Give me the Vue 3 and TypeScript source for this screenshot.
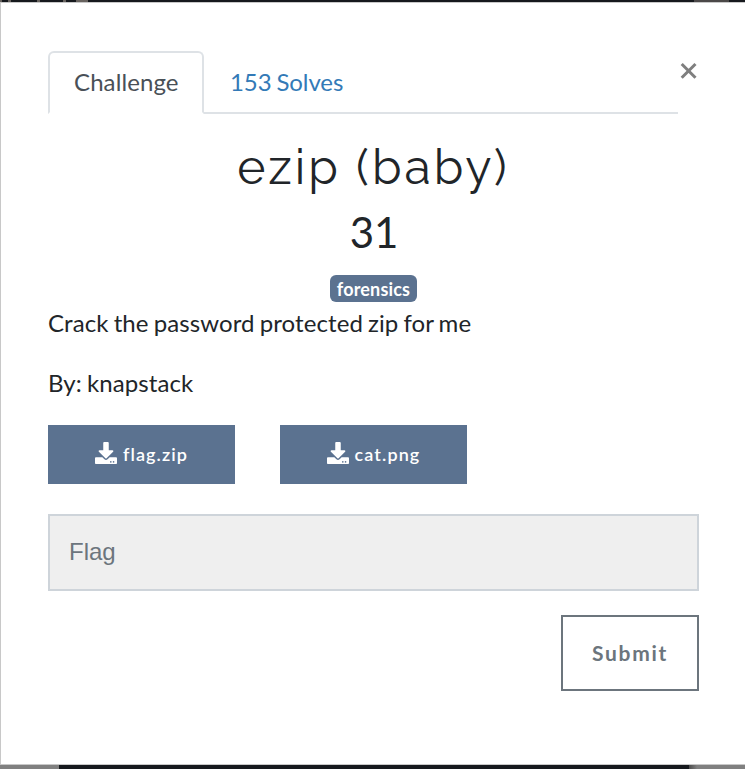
<script setup lang="ts">
import { ref } from 'vue'

const tabs: string[] = ['Challenge', '153 Solves']
const active = ref(0)
const files: string[] = ['flag.zip', 'cat.png']
const flag = ref('')
</script>

<template>
  <div class="page">
    <div class="strip top"><span class="specks"></span><span class="block"></span></div>
    <main class="modal">
      <header class="head">
        <nav class="tabs">
          <a v-for="(tab, i) in tabs" :key="tab" class="tab" :class="{ active: i === active }" @click="active = i">{{ tab }}</a>
        </nav>
        <button class="close" aria-label="Close">
          <svg viewBox="0 0 18 18" width="18" height="18"><path d="M1.700 2 15.500 15.800M15.500 2 1.700 15.800" /></svg>
        </button>
      </header>
      <h2 class="title">ezip (baby)</h2>
      <h3 class="points">31</h3>
      <div class="tags"><span class="badge">forensics</span></div>
      <p class="desc">Crack the password protected zip for me</p>
      <p class="desc author">By: knapstack</p>
      <div class="files">
        <a v-for="file in files" :key="file" class="file">
          <svg viewBox="0 0 512 512" width="22" height="22">
            <path d="M216 0h80c13.300 0 24 10.700 24 24v168h87.700c17.800 0 26.700 21.500 14.100 34.100L269.700 378.300c-7.500 7.500-19.800 7.500-27.300 0L90.100 226.100c-12.600-12.600-3.700-34.100 14.100-34.100H192V24c0-13.300 10.700-24 24-24zm296 376v112c0 13.300-10.700 24-24 24H24c-13.300 0-24-10.700-24-24V376c0-13.300 10.700-24 24-24h146.700l49 49c20.100 20.100 52.500 20.100 72.600 0l49-49H488c13.300 0 24 10.700 24 24zm-124 88c0-11-9-20-20-20s-20 9-20 20 9 20 20 20 20-9 20-20zm64 0c0-11-9-20-20-20s-20 9-20 20 9 20 20 20 20-9 20-20z" />
          </svg>
          <span>{{ file }}</span>
        </a>
      </div>
      <input v-model="flag" class="flag" type="text" placeholder="Flag" />
      <button class="submit">Submit</button>
    </main>
    <div class="strip bottom"><span class="left"></span><span class="right"></span></div>
  </div>
</template>

<style>
body {
  margin: 0;
  overflow: hidden;
}
</style>

<style scoped>
.page {
  width: 745px;
  height: 769px;
  display: flex;
  flex-direction: column;
  background: #16191d;
  font-family: Lato, sans-serif;
  font-size: 24px;
  line-height: 36px;
  color: #212529;
}
.strip {
  display: flex;
  flex: none;
}
.top {
  height: 2px;
}
.specks {
  width: 90px;
  background: linear-gradient(
    90deg,
    #68635f 0 2px, transparent 2px 8px,
    #68635f 8px 11px, transparent 11px 37px,
    #68635f 37px 40px, transparent 40px 63px,
    #68635f 63px 66px, transparent 66px 76px,
    #68635f 76px 88px, transparent 88px
  );
}
.top .block {
  width: 35px;
  margin-left: auto;
  margin-right: 16px;
  background: #4b4848;
}
.bottom {
  height: 4px;
  justify-content: space-between;
}
.bottom .left {
  width: 59px;
  background: #808080;
}
.bottom .right {
  width: 56px;
  background: linear-gradient(90deg, #4b4b4b, #808080 8px);
}
.modal {
  box-sizing: border-box;
  height: 763px;
  display: flex;
  flex-direction: column;
  padding: 48px 46px 0 47px;
  background: #fff;
  border: solid #c8c8c8;
  border-width: 1px 0 1px 1px;
}
.head {
  display: flex;
  align-items: flex-start;
  justify-content: space-between;
  height: 63px;
}
.tabs {
  box-sizing: border-box;
  display: flex;
  width: 630px;
  height: 63px;
  border-bottom: 2px solid #dee2e6;
}
.tab {
  box-sizing: border-box;
  height: 63px;
  padding: 11px 24px;
  border: 2px solid transparent;
  border-radius: 6px 6px 0 0;
  color: #337ab7;
  letter-spacing: -0.1px;
  word-spacing: -1px;
  cursor: pointer;
}
.tab.active {
  color: #495057;
  letter-spacing: 0.1px;
  width: 156px;
  background: #fff;
  border-color: #dee2e6 #dee2e6 #fff;
}
.close {
  margin: 11px 1px 0 0;
  padding: 0;
  border: 0;
  background: none;
  line-height: 0;
}
.close svg {
  stroke: #7f7f7f;
  stroke-width: 3;
}
.title {
  margin: 24px 0 0;
  font-family: Raleway, Lato, sans-serif;
  font-size: 48px;
  font-weight: 400;
  line-height: 58px;
  letter-spacing: 3px;
  text-align: center;
}
.points {
  margin: 11px 0 0;
  padding-left: 1px;
  font-size: 42px;
  font-weight: 400;
  line-height: 50px;
  text-align: center;
}
.tags {
  display: flex;
  justify-content: center;
  margin-top: 18px;
}
.badge {
  height: 27px;
  padding: 0 7px;
  border-radius: 6px;
  background: #5b7290;
  color: #fff;
  font-size: 18px;
  font-weight: 700;
  line-height: 28px;
  letter-spacing: 0.17px;
}
.desc {
  margin: 3px 0 0;
  letter-spacing: 0.1px;
  word-spacing: -1.2px;
}
.author {
  margin-top: 24px;
}
.files {
  display: flex;
  gap: 45px;
  margin-top: 24px;
}
.file {
  box-sizing: border-box;
  display: flex;
  align-items: center;
  justify-content: center;
  gap: 6px;
  width: 187px;
  height: 59px;
  padding-bottom: 2px;
  background: #5b7290;
  color: #fff;
  font-size: 18px;
  font-weight: 600;
  letter-spacing: 1.1px;
}
.file svg {
  position: relative;
  top: -1px;
  fill: #fff;
}
.file span {
  position: relative;
  top: 0.5px;
}
.flag {
  box-sizing: border-box;
  width: 651px;
  height: 77px;
  margin: 30px 0 0;
  padding: 0 19px 1px;
  border: 2px solid #ced4da;
  border-radius: 0;
  outline: 0;
  background: #efefef;
  color: #212529;
  font-family: "Liberation Sans", sans-serif;
  font-size: 24px;
}
.flag::placeholder {
  color: #6c757d;
}
.submit {
  align-self: flex-end;
  width: 138px;
  height: 76px;
  margin-top: 24px;
  padding: 0 0 2px;
  border: 2px solid #6c757d;
  background: #fff;
  color: #6c757d;
  font-family: Lato, sans-serif;
  font-size: 21px;
  font-weight: 700;
  letter-spacing: 1.7px;
}
</style>
